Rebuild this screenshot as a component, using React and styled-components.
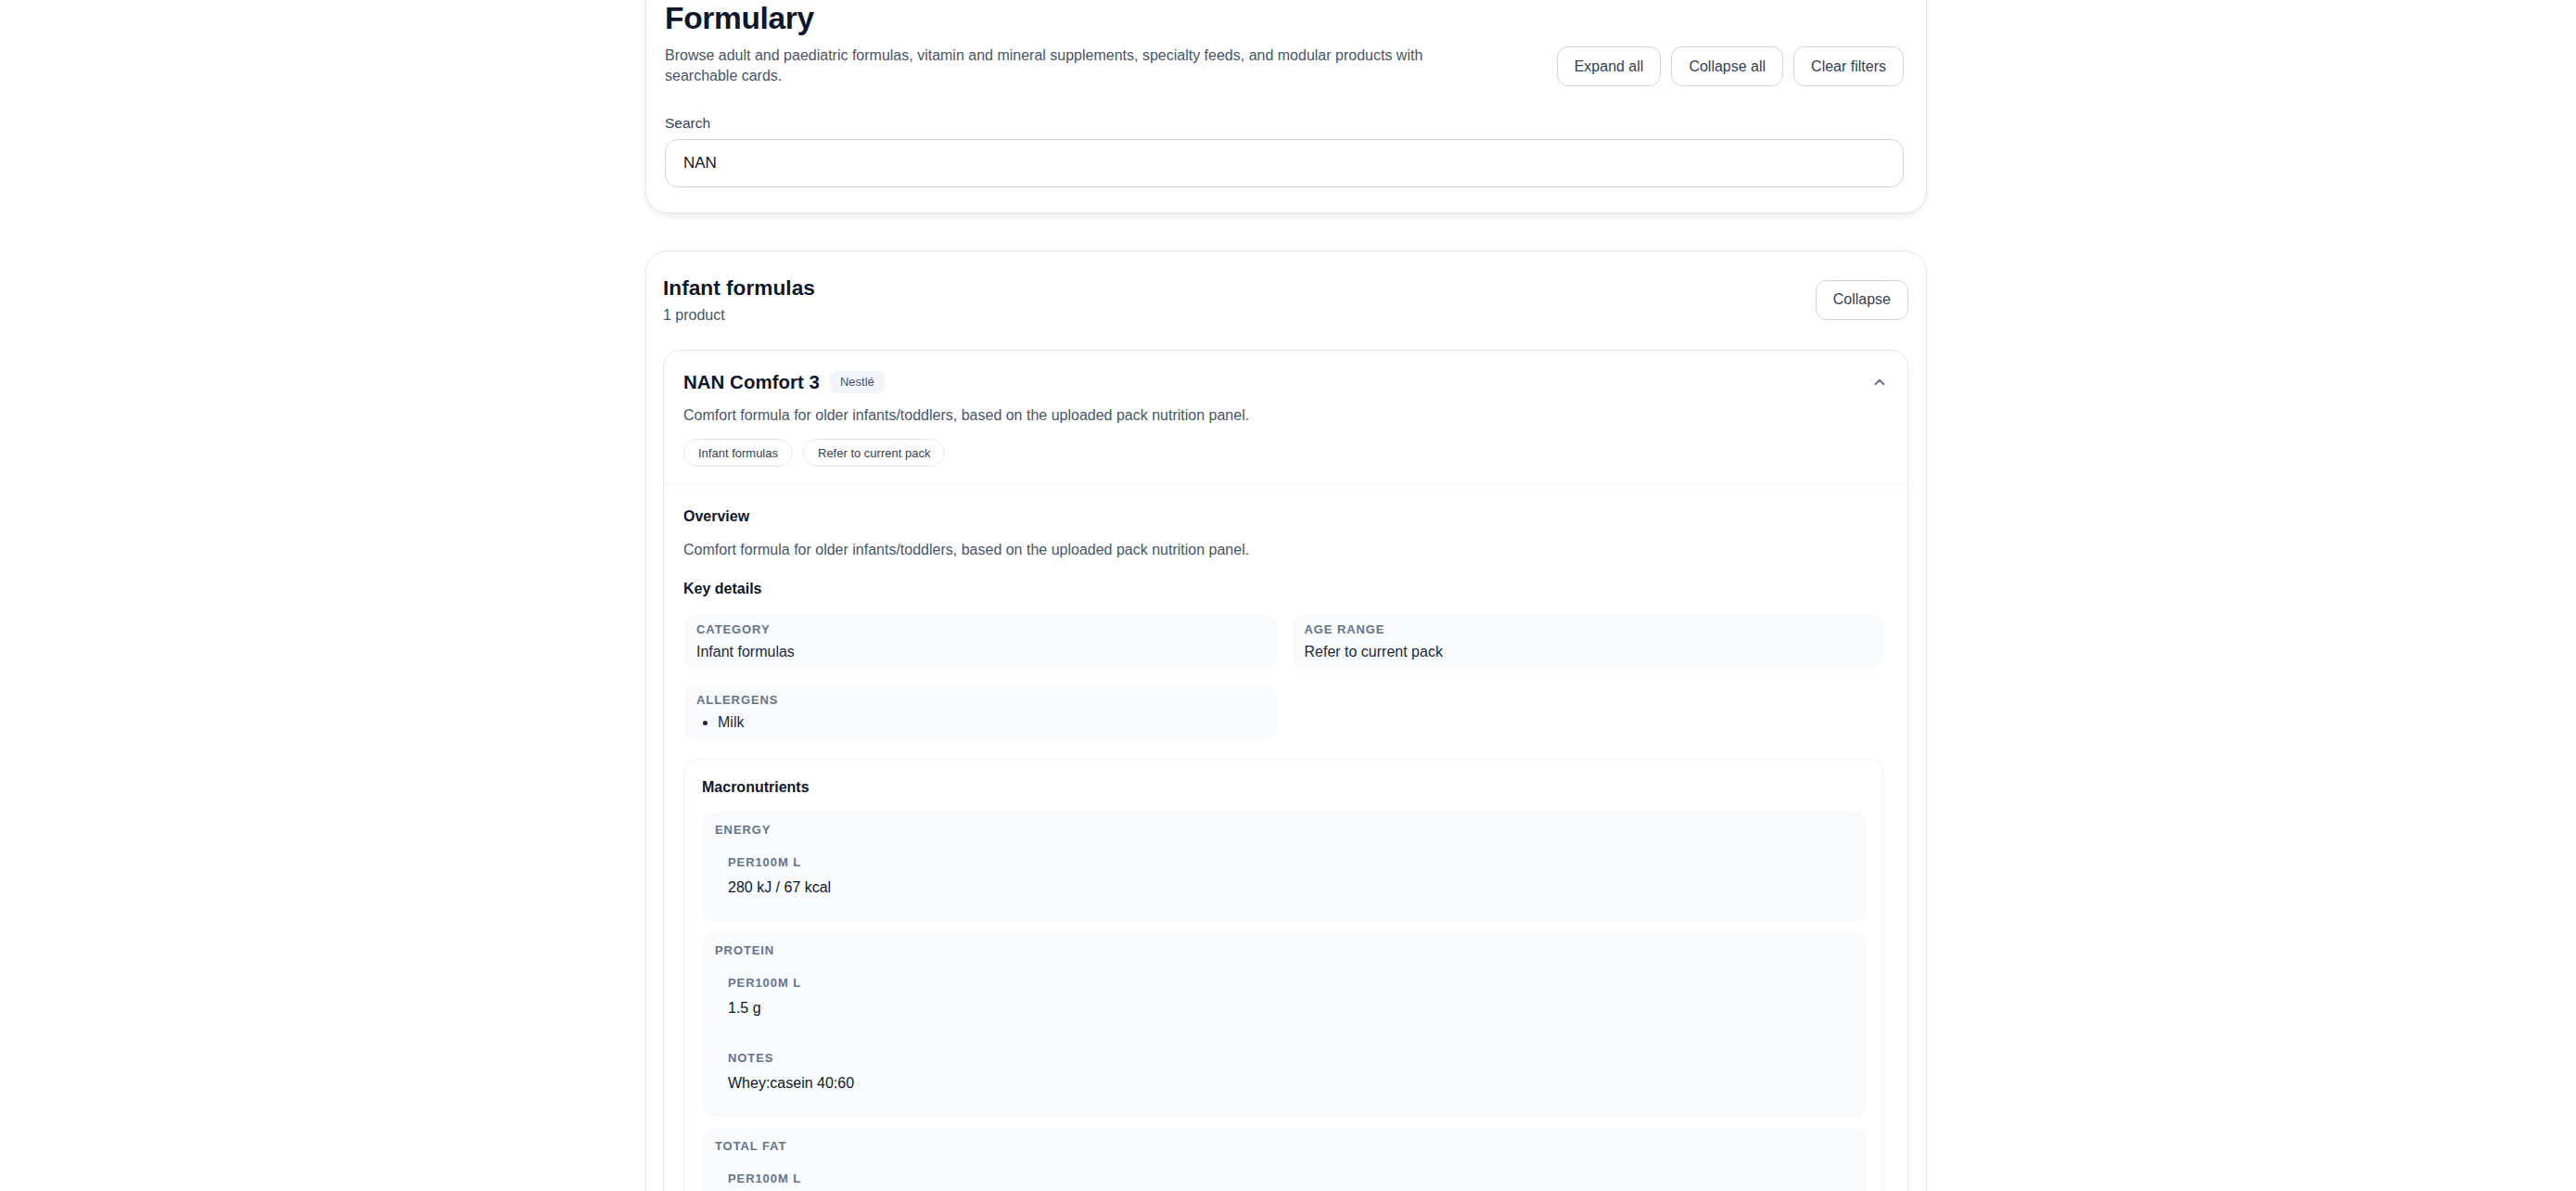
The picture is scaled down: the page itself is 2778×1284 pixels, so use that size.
import React from 'react'
import styled, { createGlobalStyle } from 'styled-components'
import { ChevronUp } from 'lucide-react'

const GlobalStyle = createGlobalStyle`
  body {
    margin: 0;
    background: #ffffff;
    font-family: "Liberation Sans", Arial, Helvetica, sans-serif;
    color: #0f172a;
  }
  * { box-sizing: border-box; }
`

const macros = [
  { name: 'Energy', entries: [{ label: 'Per100m L', value: '280 kJ / 67 kcal' }] },
  {
    name: 'Protein',
    entries: [
      { label: 'Per100m L', value: '1.5 g' },
      { label: 'Notes', value: 'Whey:casein 40:60' },
    ],
  },
  { name: 'Total fat', entries: [{ label: 'Per100m L', value: '3.3 g' }] },
  { name: 'Carbohydrate', entries: [{ label: 'Per100m L', value: '7.8 g' }] },
]

const App = () => {
  return (
    <>
      <GlobalStyle />
      <Page>
        <TopPanel>
          <Header>
            <Intro>
              <Title>Formulary</Title>
              <Lead>
                Browse adult and paediatric formulas, vitamin and mineral supplements, specialty feeds, and modular products with searchable cards.
              </Lead>
            </Intro>
            <ButtonRow>
              <Button>Expand all</Button>
              <Button>Collapse all</Button>
              <Button>Clear filters</Button>
            </ButtonRow>
          </Header>
          <SearchLabel htmlFor="search">Search</SearchLabel>
          <SearchInput id="search" defaultValue="NAN" />
        </TopPanel>

        <Section>
          <SectionHeader>
            <div>
              <SectionTitle>Infant formulas</SectionTitle>
              <SectionCount>1 product</SectionCount>
            </div>
            <Button $pad={18}>Collapse</Button>
          </SectionHeader>

          <ProductCard>
            <ProductHeader>
              <TitleRow>
                <ProductName>NAN Comfort 3</ProductName>
                <Brand>Nestlé</Brand>
                <Toggle>
                  <ChevronUp size={18} strokeWidth={2.5} />
                </Toggle>
              </TitleRow>
              <ProductDesc>Comfort formula for older infants/toddlers, based on the uploaded pack nutrition panel.</ProductDesc>
              <Tags>
                <Tag>Infant formulas</Tag>
                <Tag>Refer to current pack</Tag>
              </Tags>
            </ProductHeader>

            <ProductBody>
              <BlockTitle>Overview</BlockTitle>
              <BodyText>Comfort formula for older infants/toddlers, based on the uploaded pack nutrition panel.</BodyText>

              <BlockTitle $gap={20}>Key details</BlockTitle>
              <DetailGrid>
                <DetailBox>
                  <SmallLabel>Category</SmallLabel>
                  <Value>Infant formulas</Value>
                </DetailBox>
                <DetailBox>
                  <SmallLabel>Age range</SmallLabel>
                  <Value>Refer to current pack</Value>
                </DetailBox>
                <DetailBox>
                  <SmallLabel>Allergens</SmallLabel>
                  <Bullets>
                    <li>Milk</li>
                  </Bullets>
                </DetailBox>
              </DetailGrid>

              <MacroPanel>
                <BlockTitle>Macronutrients</BlockTitle>
                <NutrientList>
                  {macros.map((m) => (
                    <Nutrient key={m.name}>
                      <SmallLabel>{m.name}</SmallLabel>
                      <Entries>
                        {m.entries.map((e) => (
                          <Entry key={e.label}>
                            <SmallLabel>{e.label}</SmallLabel>
                            <EntryValue>{e.value}</EntryValue>
                          </Entry>
                        ))}
                      </Entries>
                    </Nutrient>
                  ))}
                </NutrientList>
              </MacroPanel>
            </ProductBody>
          </ProductCard>
        </Section>
      </Page>
    </>
  )
}

export default App

const Page = styled.div`
  width: 1382px;
  margin: 0 auto 0 calc(50% - 693px);
  padding-bottom: 40px;
  display: flex;
  flex-direction: column;
  gap: 40px;
`

const TopPanel = styled.div`
  margin-top: -30px;
  padding: 30px 24px 27px 20px;
  background: #fff;
  border: 1px solid #e2e8f0;
  border-radius: 24px;
  box-shadow: 0 3px 6px rgba(15, 23, 42, 0.08);
  display: flex;
  flex-direction: column;
`

const Header = styled.div`
  display: flex;
  justify-content: space-between;
  align-items: flex-end;
  gap: 24px;
`

const Intro = styled.div`
  max-width: 829px;
`

const Title = styled.h1`
  margin: 0;
  font-size: 33.5px;
  line-height: 38px;
  font-weight: 700;
  color: #0f172a;
  letter-spacing: -0.01em;
`

const Lead = styled.p`
  margin: 10px 0 0;
  font-size: 16px;
  line-height: 22px;
  color: #475569;
`

const ButtonRow = styled.div`
  display: flex;
  gap: 11px;
  flex-shrink: 0;
`

const Button = styled.button`
  height: 43px;
  padding: 0 ${(p) => p.$pad || 18}px;
  background: #fff;
  border: 1px solid #cbd5e1;
  border-radius: 12px;
  font-family: inherit;
  font-size: 16px;
  color: #334155;
  cursor: pointer;
`

const SearchLabel = styled.label`
  margin-top: 29px;
  font-size: 15.5px;
  line-height: 22px;
  color: #334155;
`

const SearchInput = styled.input`
  margin-top: 6px;
  width: 100%;
  height: 52px;
  padding: 0 19px;
  border: 1px solid #cbd5e1;
  border-radius: 14px;
  font-family: inherit;
  font-size: 17px;
  color: #0f172a;
  outline: none;
`

const Section = styled.section`
  padding: 25px 19px 18px 18px;
  background: #fff;
  border: 1px solid #e2e8f0;
  border-radius: 24px;
  box-shadow: 0 3px 5px rgba(15, 23, 42, 0.05);
`

const SectionHeader = styled.div`
  display: flex;
  justify-content: space-between;
  align-items: center;
`

const SectionTitle = styled.h2`
  margin: 0;
  font-size: 22.7px;
  line-height: 28px;
  font-weight: 700;
  color: #0f172a;
`

const SectionCount = styled.p`
  margin: 6px 0 0;
  font-size: 16px;
  line-height: 20px;
  color: #475569;
`

const ProductCard = styled.article`
  margin-top: 27px;
  border: 1px solid #e2e8f0;
  border-radius: 18px;
  overflow: hidden;
`

const ProductHeader = styled.div`
  padding: 20px 21px 19px 21px;
  border-bottom: 1px solid #eef2f6;
`

const TitleRow = styled.div`
  display: flex;
  align-items: center;
  gap: 11px;
  height: 27px;
`

const ProductName = styled.h3`
  margin: 0;
  font-size: 20.5px;
  line-height: 27px;
  font-weight: 700;
  color: #0f172a;
`

const Brand = styled.span`
  padding: 0 11px;
  height: 24px;
  display: inline-flex;
  align-items: center;
  background: #f1f5f9;
  border-radius: 8px;
  font-size: 13px;
  color: #475569;
`

const Toggle = styled.span`
  margin-left: auto;
  display: flex;
  color: #64748b;
`

const ProductDesc = styled.p`
  margin: 12px 0 0;
  font-size: 16px;
  line-height: 22px;
  color: #475569;
`

const Tags = styled.div`
  margin-top: 14px;
  display: flex;
  gap: 11px;
`

const Tag = styled.span`
  height: 30px;
  padding: 0 15px;
  display: inline-flex;
  align-items: center;
  border: 1px solid #e2e8f0;
  border-radius: 999px;
  font-size: 13px;
  color: #334155;
`

const ProductBody = styled.div`
  padding: 23px 25px 24px 21px;
`

const BlockTitle = styled.h4`
  margin: ${(p) => (p.$gap ? `${p.$gap}px` : 0)} 0 0;
  font-size: 16px;
  line-height: 22px;
  font-weight: 700;
  color: #0f172a;
`

const BodyText = styled.p`
  margin: 14px 0 0;
  font-size: 16px;
  line-height: 22px;
  color: #475569;
`

const DetailGrid = styled.div`
  margin-top: 16px;
  display: grid;
  grid-template-columns: 1fr 1fr;
  gap: 16px;
`

const DetailBox = styled.div`
  padding: 8px 14px;
  min-height: 60px;
  background: #f8fafc;
  border-radius: 14px;
`

const SmallLabel = styled.div`
  font-size: 13px;
  line-height: 18px;
  font-weight: 700;
  letter-spacing: 0.07em;
  text-transform: uppercase;
  color: #64748b;
`

const Value = styled.div`
  margin-top: 4px;
  font-size: 16px;
  line-height: 22px;
  color: #1e293b;
`

const Bullets = styled.ul`
  margin: 4px 0 0;
  padding-left: 23px;
  font-size: 16px;
  line-height: 22px;
  color: #1e293b;
`

const MacroPanel = styled.div`
  margin-top: 20px;
  padding: 19px 18px 19px 19px;
  border: 1px solid #eef2f6;
  border-radius: 16px;
`

const NutrientList = styled.div`
  margin-top: 15px;
  display: flex;
  flex-direction: column;
  gap: 11px;
`

const Nutrient = styled.div`
  padding: 11px 14px 16px;
  background: #f8fafc;
  border-radius: 14px;
`

const Entries = styled.div`
  margin-top: 7px;
  display: flex;
  flex-direction: column;
  gap: 14px;
`

const Entry = styled.div`
  padding: 10px 14px;
`

const EntryValue = styled.div`
  margin-top: 7px;
  font-size: 16px;
  line-height: 22px;
  color: #0f172a;
`
